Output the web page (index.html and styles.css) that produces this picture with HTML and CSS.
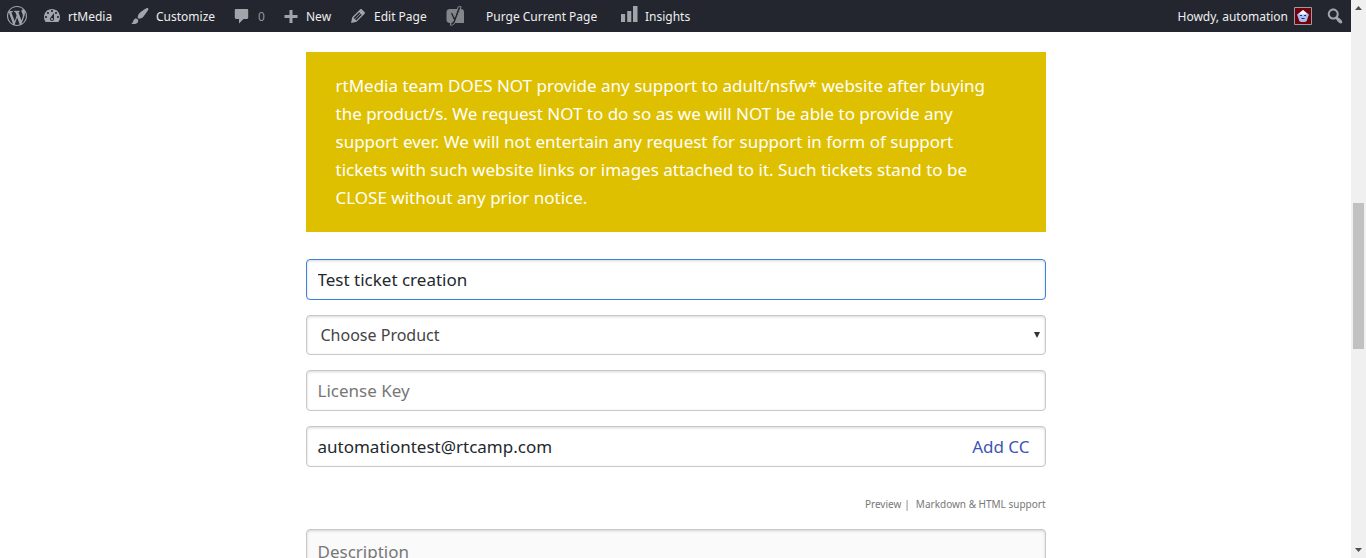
FILE: index.html
```html
<!DOCTYPE html>
<html lang="en">
<head>
<meta charset="utf-8">
<meta name="viewport" content="width=device-width, initial-scale=1">
<title>rtMedia support</title>
<link rel="stylesheet" href="styles.css">
</head>
<body>
<div class="page">
  <nav class="adminbar" aria-label="Toolbar">
    <a class="item item-logo" href="#" aria-label="About WordPress">
      <svg class="icon" viewBox="0 0 20 20"><path d="M20 10c0-5.51-4.49-10-10-10C4.48 0 0 4.49 0 10c0 5.52 4.48 10 10 10 5.51 0 10-4.48 10-10zM7.78 15.37L4.37 6.22c.55-.02 1.17-.08 1.17-.08.5-.06.44-1.13-.06-1.11 0 0-1.45.11-2.37.11-.18 0-.37 0-.58-.01C4.12 2.69 6.87 1.11 10 1.11c2.33 0 4.45.87 6.05 2.34-.68-.11-1.65.39-1.65 1.58 0 .74.45 1.36.9 2.1.35.61.55 1.36.55 2.46 0 1.49-1.4 5-1.4 5l-3.03-8.37c.54-.02.82-.17.82-.17.5-.05.44-1.25-.06-1.22 0 0-1.44.12-2.38.12-.87 0-2.33-.12-2.33-.12-.5-.03-.56 1.2-.06 1.22l.92.08 1.26 3.41zM17.41 10c.24-.64.74-1.87.43-4.25.7 1.29 1.05 2.71 1.05 4.25 0 3.29-1.73 6.24-4.4 7.78.97-2.59 1.94-5.2 2.92-7.78zM6.1 18.09C3.12 16.65 1.11 13.53 1.11 10c0-1.3.23-2.48.72-3.59C3.25 10.3 4.67 14.2 6.1 18.09zm4.03-6.63l2.58 6.98c-.86.29-1.76.45-2.71.45-.79 0-1.57-.11-2.29-.33.81-2.38 1.62-4.74 2.42-7.1z"/></svg>
    </a>
    <a class="item item-site" href="#">
      <svg class="icon" viewBox="0 0 20 20"><path d="M3.76 16h12.48c1.1-1.37 1.76-3.11 1.76-5 0-4.42-3.58-8-8-8s-8 3.58-8 8c0 1.89.66 3.63 1.76 5zM10 4c.55 0 1 .45 1 1s-.45 1-1 1-1-.45-1-1 .45-1 1-1zM6 6c.55 0 1 .45 1 1s-.45 1-1 1-1-.45-1-1 .45-1 1-1zm8 0c.55 0 1 .45 1 1s-.45 1-1 1-1-.45-1-1 .45-1 1-1zm-5.37 5.55L12 7v6c0 1.1-.9 2-2 2s-2-.9-2-2c0-.57.24-1.08.63-1.45zM4 10c.55 0 1 .45 1 1s-.45 1-1 1-1-.45-1-1 .45-1 1-1zm12 0c.55 0 1 .45 1 1s-.45 1-1 1-1-.45-1-1 .45-1 1-1zm-5 3c0-.55-.45-1-1-1s-1 .45-1 1 .45 1 1 1 1-.45 1-1z"/></svg>
      <span>rtMedia</span>
    </a>
    <a class="item item-customize" href="#">
      <svg class="icon" viewBox="0 0 20 20"><path d="M18.33 3.57s.27-.8-.31-1.36c-.53-.52-1.22-.24-1.22-.24-.61.3-5.76 3.47-7.67 5.57-.86.96-2.06 3.79-1.09 4.82.92.98 3.96-.17 4.79-1 2.06-2.06 5.21-7.17 5.5-7.79zM1.4 17.65c2.37-1.56 1.46-3.41 3.23-4.64.93-.65 2.22-.62 3.08.29.63.67.8 2.57-.16 3.46-1.57 1.45-4 1.55-6.15.89z"/></svg>
      <span>Customize</span>
    </a>
    <a class="item item-comments" href="#">
      <svg class="icon" viewBox="0 0 20 20"><path d="M4 3h11c.7 0 1.200.5 1.200 1.200v7.600c0 .7-.5 1.200-1.200 1.200h-3.500l-4.500 4.500v-4.500H4c-.7 0-1.200-.5-1.200-1.200V4.200C2.800 3.500 3.300 3 4 3z"/></svg>
      <span class="count">0</span>
    </a>
    <a class="item item-new" href="#">
      <svg class="icon" viewBox="0 0 20 20"><path d="M15.500 9v3h-5v5h-3v-5h-5V9h5V4h3v5z"/></svg>
      <span>New</span>
    </a>
    <a class="item item-edit" href="#">
      <svg class="icon" viewBox="0 0 20 20"><path d="M13.890 3.390l2.710 2.720c.46.46.42 1.240.03 1.640l-8.010 8.020-5.560 1.160 1.160-5.580s7.600-7.630 7.990-8.030c.39-.39 1.220-.39 1.680.07zm-2.730 2.790l-5.590 5.610 1.110 1.110 5.540-5.650zm-2.970 8.230l5.580-5.600-1.070-1.080-5.590 5.600z"/></svg>
      <span>Edit Page</span>
    </a>
    <a class="item item-seo" href="#" aria-label="SEO">
      <svg class="icon" viewBox="0 0 20 20"><path class="seo-box" d="M5 3h11c1.700 0 3 1.300 3 3v11H5c-2 0-3.500-1.300-3.500-3V6c0-1.700 1.400-3 3.500-3z"/><path class="seo-edge" d="M5.200 6.800l3.300 7.200c-.6 1.800-1.200 2.900-3 3v2.300c3 0 4.300-1.700 5.300-4.600L16.200.7h-2.900L9.600 11.200 7.900 6.800z"/></svg>
    </a>
    <a class="item item-purge" href="#"><span>Purge Current Page</span></a>
    <a class="item item-insights" href="#">
      <svg class="icon" viewBox="0 0 20 20"><path d="M18.500 16V0h-4.500v16zM12.300 16V5H8.200v11zM6.100 16V8H2v8z"/></svg>
      <span>Insights</span>
    </a>
    <a class="item item-account" href="#">
      <span>Howdy, automation</span>
      <svg class="avatar" viewBox="0 0 18 18"><path fill="#730008" stroke="#999da3" d="M.5.5h17v17H.5z"/><path fill="#a9bdf5" d="M9 3l2.500 2L15 7.500l-1 2.500-1.300 4L11 15H7l-1.700-1L4 10 3 7.500 6.500 5z"/><path fill="#f2f4ff" d="M9 3l4 3.500-2 1H7l-2-1z"/><path fill="#27335e" d="M6 8h2v1H6zM10 8h2v1h-2zM7.500 11h3v1h-3z"/></svg>
    </a>
    <a class="item item-search" href="#" aria-label="Search">
      <svg class="icon" viewBox="0 0 20 20"><path d="M12.140 4.180c1.870 1.870 2.110 4.750.72 6.890.12.1.22.21.36.31.2.16.47.36.81.59.34.24.56.39.66.47.42.31.73.57.94.78.32.32.6.65.84 1 .25.35.44.69.59 1.040.14.35.21.68.18 1-.02.32-.14.59-.36.81s-.49.34-.81.36c-.31.02-.65-.04-.99-.19-.35-.14-.7-.34-1.040-.59-.35-.24-.68-.52-1-.84-.21-.21-.47-.52-.77-.93-.1-.13-.25-.35-.47-.66-.22-.32-.4-.57-.56-.78-.16-.2-.29-.35-.44-.5-2.070 1.090-4.690.76-6.440-.98-2.140-2.150-2.140-5.640 0-7.780 2.150-2.150 5.630-2.150 7.780 0zm-1.410 6.360c1.360-1.370 1.360-3.580 0-4.950-1.370-1.370-3.590-1.370-4.950 0-1.370 1.370-1.370 3.580 0 4.950 1.360 1.370 3.580 1.370 4.950 0z"/></svg>
    </a>
  </nav>
  <main class="content">
    <p class="notice">rtMedia team DOES NOT provide any support to adult/nsfw* website after buying the product/s. We request NOT to do so as we will NOT be able to provide any support ever. We will not entertain any request for support in form of support tickets with such website links or images attached to it. Such tickets stand to be CLOSE without any prior notice.</p>
    <form class="ticket">
      <input class="field field-active" type="text" value="Test ticket creation" aria-label="Subject">
      <select class="field field-select" aria-label="Product"><option>Choose Product</option></select>
      <input class="field" type="text" placeholder="License Key" aria-label="License Key">
      <div class="field email">
        <input class="email-input" type="email" value="automationtest@rtcamp.com" aria-label="Email">
        <a class="add-cc" href="#">Add CC</a>
      </div>
      <div class="links"><a href="#">Preview</a><span>|</span><a class="markdown" href="#">Markdown &amp; HTML support</a></div>
      <textarea class="field description" placeholder="Description" aria-label="Description"></textarea>
    </form>
  </main>
</div>
<div class="scrollbar" aria-hidden="true">
  <svg class="arrow" viewBox="0 0 15 15"><path d="M4 10h7L7.500 6z"/></svg>
  <div class="track"><div class="thumb"></div></div>
  <svg class="arrow" viewBox="0 0 15 15"><path d="M4 5h7L7.500 9z"/></svg>
</div>
</body>
</html>
```

FILE: styles.css
```css
* {
  box-sizing: border-box;
}

body {
  display: flex;
  height: 100vh;
  margin: 0;
  overflow: hidden;
  background: #fff;
  color: #23282d;
  font-family: "Noto Sans", "Open Sans", sans-serif;
  font-size: 17px;
  line-height: 28px;
}

a {
  text-decoration: none;
}

.page {
  flex: 1;
  min-width: 0;
  overflow: hidden;
}

.adminbar {
  display: flex;
  height: 32px;
  padding: 0 6px 0 7px;
  background: #23262f;
  font-size: 12px;
  line-height: 32px;
}

.item {
  display: flex;
  flex: none;
  align-items: center;
  gap: 6px;
  color: #eee;
  white-space: nowrap;
}

.item span {
  padding-top: 1px;
}

.icon {
  width: 20px;
  height: 20px;
  fill: #a0a5aa;
}

.item-logo { width: 35px; }
.item-site { width: 88px; }
.item-customize { width: 102px; }
.item-comments { width: 50px; }
.item-new { gap: 4px; width: 66px; }
.item-edit { width: 97px; }
.item-seo { width: 41px; }
.item-purge { width: 133px; }

.item-account {
  margin-left: auto;
}

.item-search {
  margin-left: 13px;
}

.item .count {
  color: #94979c;
}

.icon .seo-box {
  fill: #82878c;
}

.icon .seo-edge {
  fill: #23262f;
  stroke: #82878c;
  stroke-width: 1;
}

.avatar {
  width: 18px;
  height: 18px;
}

.content {
  max-width: 740px;
  margin: 20px auto 0;
}

.notice {
  margin: 0 0 27px;
  padding: 20px 40px 20px 30px;
  background: #dfc000;
  color: #fff;
}

.ticket {
  display: flex;
  flex-direction: column;
  gap: 15px;
}

.field {
  width: 100%;
  height: 41px;
  padding: 0 11px;
  border: 1px solid #c8c8c8;
  border-radius: 4px;
  outline: none;
  background: #fff;
  box-shadow: inset 0 1px 3px rgba(0, 0, 0, 0.16);
  color: #23282d;
  font: inherit;
}

.field::placeholder {
  color: #777;
  opacity: 1;
}

.field-active {
  border-color: #3b82dc;
}

.field-select {
  height: 40px;
  padding: 0 14px;
  appearance: none;
  background: #fff url("data:image/svg+xml,%3Csvg xmlns='http://www.w3.org/2000/svg' width='6' height='6'%3E%3Cpath d='M0 0h6L3 6z' fill='%23333'/%3E%3C/svg%3E") no-repeat right 5px center;
  color: #444;
  font-size: 16px;
}

.email {
  display: flex;
  align-items: center;
  padding-right: 15px;
}

.email-input {
  flex: 1;
  min-width: 0;
  padding: 0;
  border: 0;
  outline: none;
  background: transparent;
  color: inherit;
  font: inherit;
}

.add-cc {
  color: #4054b8;
}

.links {
  display: flex;
  justify-content: flex-end;
  gap: 3px;
  margin-top: 12px;
  font-size: 10px;
  line-height: 20px;
  color: #777;
}

.links a {
  color: inherit;
}

.links .markdown {
  margin-left: 3px;
}

.description {
  height: 160px;
  padding: 8px 11px;
  background: #fafafa;
  resize: none;
}

.scrollbar {
  display: flex;
  flex: none;
  flex-direction: column;
  width: 15px;
  background: #f0f0f0;
}

.arrow {
  width: 15px;
  height: 15px;
  fill: #505050;
}

.track {
  flex: 1;
  padding: 188px 2px 0;
}

.thumb {
  height: 146px;
  background: #c1c1c1;
}
```
